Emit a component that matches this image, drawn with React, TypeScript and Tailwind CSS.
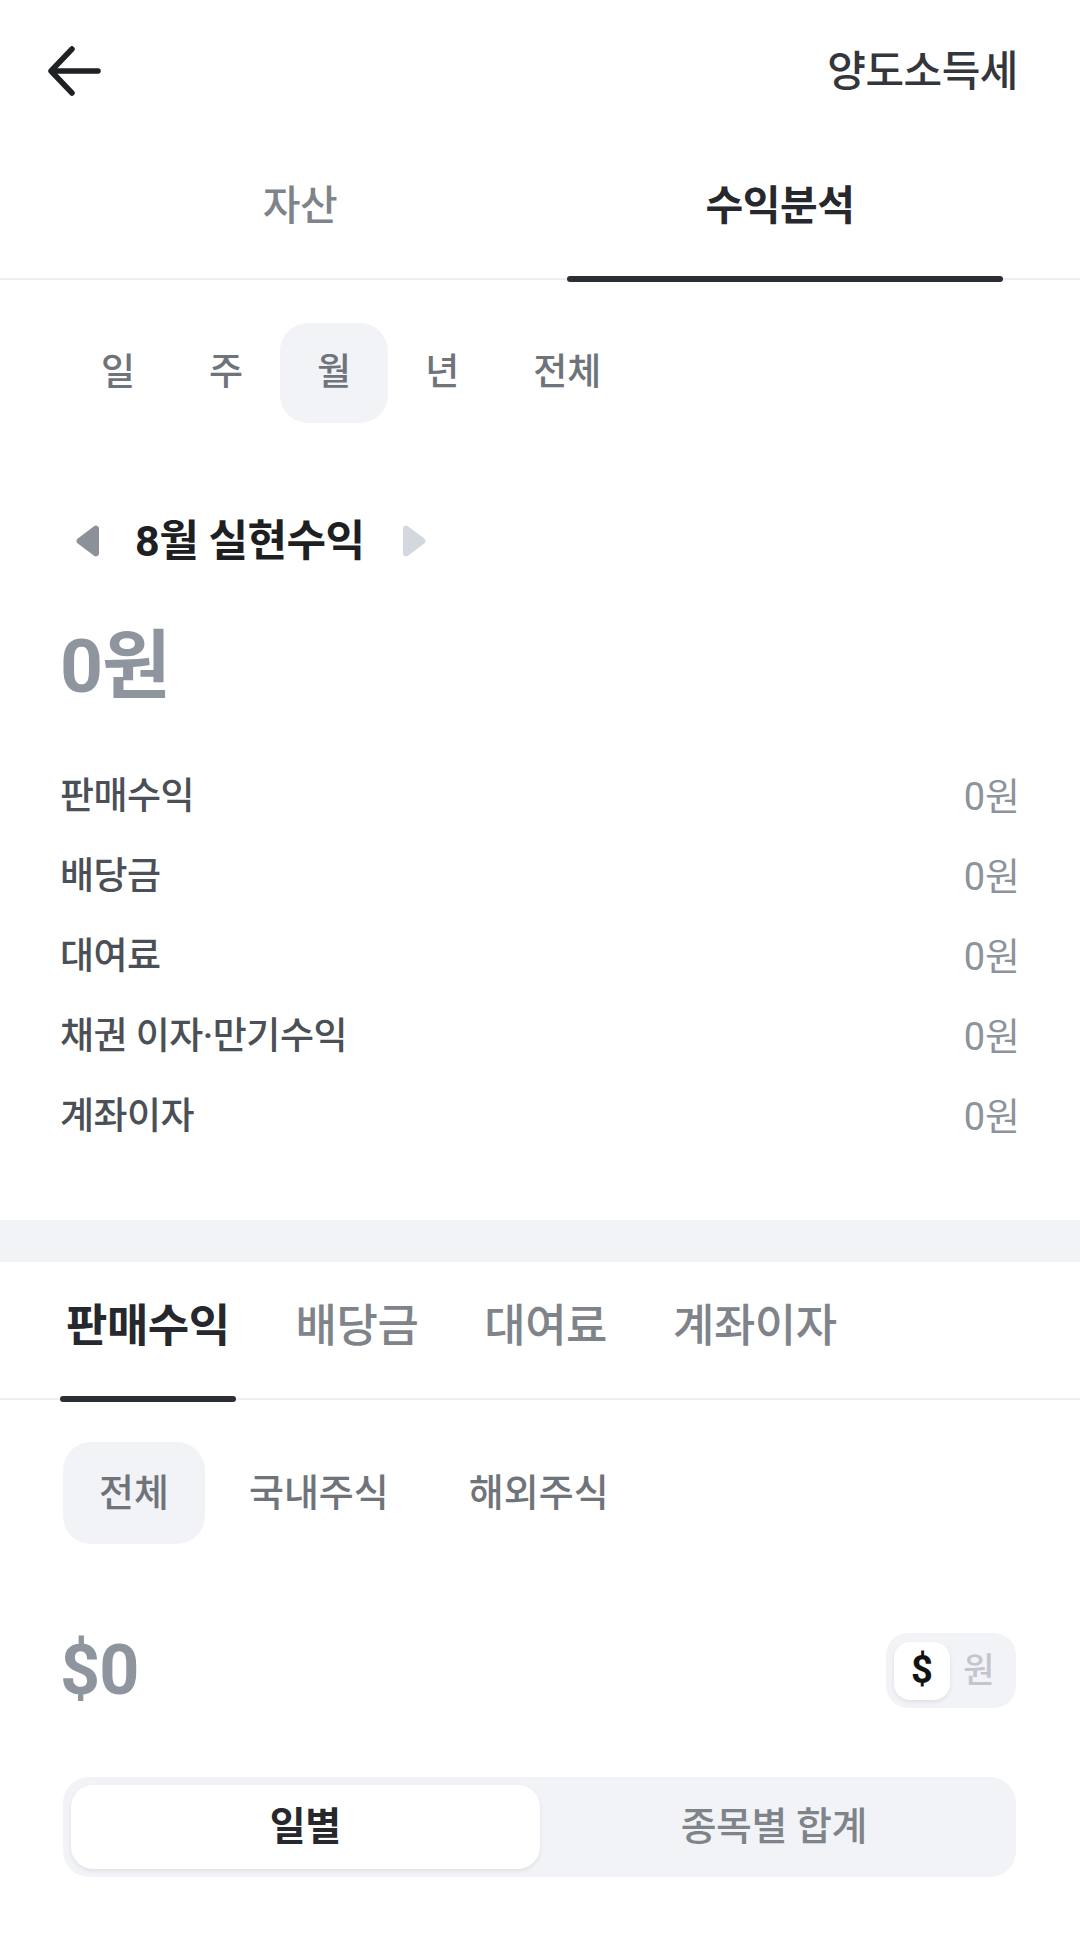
import { useState } from 'react'

// 수익분석 screen — realized profit breakdown

const FONT = { fontFamily: 'Roboto, "Noto Sans CJK KR", sans-serif' }

const PERIODS = ['일', '주', '월', '년', '전체']
const INCOME_ROWS = ['판매수익', '배당금', '대여료', '채권 이자·만기수익', '계좌이자']
const INCOME_TABS = ['판매수익', '배당금', '대여료', '계좌이자']
const MARKETS = ['전체', '국내주식', '해외주식']

function BackArrow() {
  return (
    <svg width="56" height="50" viewBox="0 0 56 50" fill="none" stroke="#1f2125" strokeWidth="5.5" strokeLinecap="round" strokeLinejoin="round">
      <path d="M52 25H6" />
      <path d="M26 3L5 25L26 47" />
    </svg>
  )
}

function Triangle({ dir, color }: { dir: 'left' | 'right'; color: string }) {
  return (
    <svg width="30" height="34" viewBox="0 0 30 34">
      {dir === 'left' ? (
        <path d="M26 4.5v25a3 3 0 0 1-4.6 2.5L4.8 19.5a3 3 0 0 1 0-5L21.4 2A3 3 0 0 1 26 4.5z" fill={color} />
      ) : (
        <path d="M4 4.5v25a3 3 0 0 0 4.6 2.5l16.6-12.5a3 3 0 0 0 0-5L8.6 2A3 3 0 0 0 4 4.5z" fill={color} />
      )}
    </svg>
  )
}

export default function App() {
  const [topTab, setTopTab] = useState(1)
  const [period, setPeriod] = useState(2)
  const [incomeTab, setIncomeTab] = useState(0)
  const [market, setMarket] = useState(0)
  const [currency, setCurrency] = useState<'usd' | 'krw'>('usd')
  const [view, setView] = useState(0)

  return (
    <div className="min-h-screen w-full bg-white" style={FONT}>
      {/* header */}
      <div className="h-[142px] flex items-center justify-between pl-[46px] pr-[62px]">
        <button className="flex items-center"><BackArrow /></button>
        <p className="text-[42px] font-medium text-[#33363b] tracking-[-0.5px]">양도소득세</p>
      </div>

      {/* top tabs */}
      <div className="flex px-[60px] border-b-2 border-[#eceef1]">
        {['자산', '수익분석'].map((t, i) => (
          <button key={t} onClick={() => setTopTab(i)} className="relative flex-1 h-[136px] flex items-center justify-center pb-[6px]">
            <span className={`text-[41px] tracking-[-0.5px] ${topTab === i ? 'font-bold text-[#26282d]' : 'font-medium text-[#7f848b]'}`}>{t}</span>
            {topTab === i && <span className="absolute left-[27px] right-[17px] bottom-[-4px] h-[6px] rounded-full bg-[#2b2e33]" />}
          </button>
        ))}
      </div>

      <div className="px-[60px]">
        {/* period chips */}
        <div className="flex mt-[43px] pl-[4px]">
          {PERIODS.map((p, i) => (
            <button
              key={p}
              onClick={() => setPeriod(i)}
              className={`h-[100px] px-[37px] rounded-[28px] text-[37px] font-medium text-[#6f747b] ${period === i ? 'bg-[#f2f3f6]' : ''}`}
            >
              {p}
            </button>
          ))}
        </div>

        {/* month navigator */}
        <div className="flex items-center mt-[92px] h-[52px] pl-[13px]">
          <Triangle dir="left" color="#8c9199" />
          <p className="ml-[32px] mr-[34px] text-[43px] font-bold text-[#1d1f23] tracking-[-0.5px]">8월 실현수익</p>
          <Triangle dir="right" color="#d3d7de" />
        </div>

        <p className="mt-[54px] text-[75px] font-bold text-[#8f959e] leading-[90px] tracking-[-1px]">0원</p>

        {/* breakdown */}
        <div className="mt-[46px]">
          {INCOME_ROWS.map(r => (
            <div key={r} className="h-[80px] flex items-center justify-between">
              <span className="text-[37px] font-medium text-[#4b4f56] tracking-[-0.5px]">{r}</span>
              <span className="text-[38px] text-[#8d939b]">0원</span>
            </div>
          ))}
        </div>
      </div>

      <div className="mt-[63px] h-[42px] bg-[#f2f3f6]" />

      {/* income tabs */}
      <div className="flex gap-[54px] px-[60px] border-b-2 border-[#eceef1]">
        {INCOME_TABS.map((t, i) => (
          <button key={t} onClick={() => setIncomeTab(i)} className="relative h-[136px] flex items-center px-[6px] pb-[6px]">
            <span className={`text-[45px] tracking-[-0.5px] ${incomeTab === i ? 'font-bold text-[#26282d]' : 'font-medium text-[#7f848b]'}`}>{t}</span>
            {incomeTab === i && <span className="absolute left-0 right-0 bottom-[-4px] h-[6px] rounded-full bg-[#2b2e33]" />}
          </button>
        ))}
      </div>

      <div className="px-[60px]">
        {/* market chips */}
        <div className="flex gap-[8px] mt-[42px] pl-[3px]">
          {MARKETS.map((m, i) => (
            <button
              key={m}
              onClick={() => setMarket(i)}
              className={`h-[102px] px-[36px] rounded-[28px] text-[38px] font-medium text-[#6f747b] ${market === i ? 'bg-[#f2f3f6]' : ''}`}
            >
              {m}
            </button>
          ))}
        </div>

        {/* usd total + currency toggle */}
        <div className="mt-[89px] h-[75px] flex items-center justify-between">
          <p className="text-[70px] font-bold text-[#8f959e] tracking-[-1px]">$0</p>
          <div className="h-[75px] w-[130px] rounded-[22px] bg-[#f2f3f6] flex items-center px-[8px] mr-[4px]">
            <button
              onClick={() => setCurrency('usd')}
              className={`w-[56px] h-[58px] rounded-[16px] flex items-center justify-center text-[38px] font-bold ${currency === 'usd' ? 'bg-white shadow-[0_2px_4px_rgba(0,0,0,0.08)] text-[#111214]' : 'text-[#c2c6cc]'}`}
            >
              $
            </button>
            <button
              onClick={() => setCurrency('krw')}
              className={`flex-1 h-[58px] rounded-[16px] flex items-center justify-center text-[34px] font-medium ${currency === 'krw' ? 'bg-white text-[#111214]' : 'text-[#c2c6cc]'}`}
            >
              원
            </button>
          </div>
        </div>

        {/* view segment */}
        <div className="mt-[69px] h-[100px] rounded-[26px] bg-[#f2f3f6] flex p-[8px] mr-[4px] ml-[3px]">
          {['일별', '종목별 합계'].map((v, i) => (
            <button
              key={v}
              onClick={() => setView(i)}
              className={`flex-1 rounded-[22px] text-[39px] tracking-[-0.5px] ${view === i ? 'bg-white font-bold text-[#26282d] shadow-[0_2px_4px_rgba(0,0,0,0.08)]' : 'font-medium text-[#7f848b]'}`}
            >
              {v}
            </button>
          ))}
        </div>
      </div>
    </div>
  )
}
